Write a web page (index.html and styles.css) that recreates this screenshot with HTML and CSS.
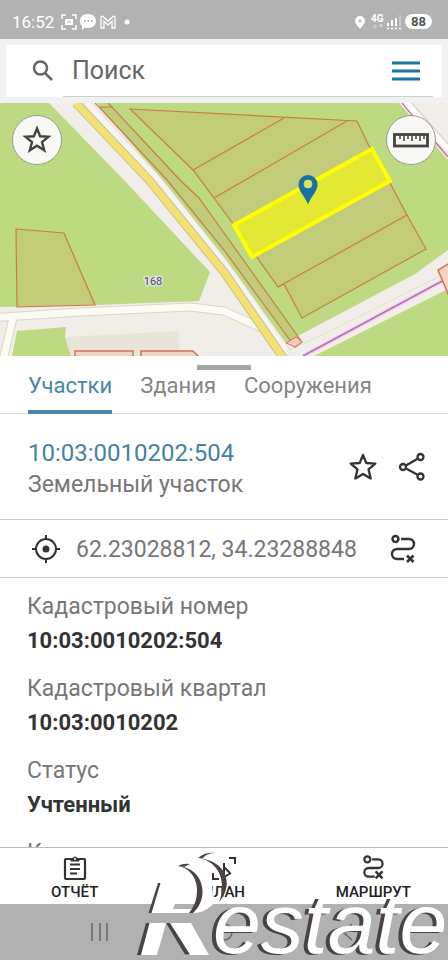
FILE: index.html
```html
<!DOCTYPE html>
<html lang="ru">
<head>
<meta charset="utf-8">
<meta name="viewport" content="width=device-width, initial-scale=1">
<title>Участки</title>
<link rel="stylesheet" href="styles.css">
</head>
<body>
<div class="app">
  <div class="status">
    <span class="clock">16:52</span>
    <svg class="status-left" width="76" height="18" viewBox="0 0 76 18" fill="none" stroke="#fff" stroke-width="1.5">
      <path d="M1 6V2h4M11 2h4v4M15 12v4h-4M5 16H1v-4"/><rect x="4" y="6" width="8" height="6" fill="#fff" stroke="none"/><path d="M6 10l2-2 2 2" stroke="#b2b2b2" stroke-width="1"/>
      <path d="M27 1c5 0 8 3 8 7s-3 7-8 7c-1 0-2 0-3-.5L21 17v-4c-1.500-1.200-2-3-2-5 0-4 3-7 8-7z" fill="#fff" stroke="none"/><path d="M23 8h1.500M26.500 8H28M30 8h1.500" stroke="#999"/>
      <path d="M40 15V4l1.500-1L47 8l5.500-5L54 4v11h-3V8l-4 4-4-4v7z" stroke-width="1.300"/>
      <circle cx="66" cy="9" r="2.500" fill="#fff" stroke="none"/>
    </svg>
    <svg class="status-right" width="46" height="16" viewBox="0 0 46 16">
      <path d="M5 2a5 5 0 0 1 5 5c0 3-3 5-5 8-2-3-5-5-5-8a5 5 0 0 1 5-5z" fill="#fff"/><circle cx="5" cy="7" r="1.500" fill="#b2b2b2"/>
      <text x="16" y="8" class="net">4G</text>
      <path d="M20 10v4M18 12l2 2 2-2M26 14v-4M24 12l2-2 2 2" stroke="#d8d8d8" fill="none"/>
      <path d="M33 12V9M37 12V6M41 12V4" stroke="#fff" stroke-width="2"/><path d="M45 12V1" stroke="#d0d0d0" stroke-width="1.500"/><path d="M32 14.500h14" stroke="#fff" stroke-width="1.500" stroke-dasharray="2 2"/>
    </svg>
    <span class="battery">88</span>
  </div>

  <header class="search">
    <div class="search-box">
      <svg width="24" height="24" viewBox="0 0 24 24" fill="none" stroke="#666" stroke-width="2.500"><circle cx="9.500" cy="9" r="6.500"/><path d="M14 14l7 7"/></svg>
      <div class="field">
        <input class="query" type="text" placeholder="Поиск" aria-label="Поиск">
        <button class="plain" aria-label="Меню"><svg width="28" height="20" viewBox="0 0 28 20"><path d="M0 2h28M0 10h28M0 18h28" stroke="#1c75a4" stroke-width="3"/></svg></button>
      </div>
    </div>
  </header>

  <section class="map">
    <svg class="map-art" viewBox="0 103 448 253" preserveAspectRatio="xMidYMid slice">
      <rect x="-400" y="103" width="1300" height="253" fill="#f1ede8"/>
      <g fill="#bdd981">
        <path d="M-400 103H49L122 178 210 272 199 301 95 305 0 307H-400z"/>
        <path d="M97 103H399L448 160V250L415 274 294 338 286 343 224 260 162 180z"/>
        <path d="M448 289V356H314z"/>
        <path d="M17 331L66 327 65 337 71 356H12z"/>
      </g>
      <path d="M66 337L179 331V356H71z" fill="#e9e4d8"/>
      <g fill="none" stroke-linejoin="round">
        <path d="M13 318L4 356M-10 318L80 312 190 307 224 311 262 328" stroke="#d9d6cc" stroke-width="9"/>
        <path d="M13 318L4 356M-10 318L80 312 190 307 224 311 262 328" stroke="#fbfbf2" stroke-width="7"/>
        <path d="M87 103L158 180 224 263 288 353" stroke="#e3dfd9" stroke-width="8"/>
        <path d="M87 103L158 180 224 263 288 353" stroke="#f6f4f1" stroke-width="6"/>
        <path d="M76 103L149 180 224 272 284 359" stroke="#c7bf9b" stroke-width="9"/>
        <path d="M76 103L149 180 224 272 284 359" stroke="#f5e072" stroke-width="7"/>
        <path d="M286 352L330 331 448 272" stroke="#d6e4cd"/>
        <path d="M303 356L448 278" stroke="#ead1e5" stroke-width="4"/>
        <path d="M303 356L448 278" stroke="#b968ba" stroke-width="1.500"/>
        <path d="M402 103L448 157" stroke="#cf7398" stroke-width="1.500"/>
        <path d="M406 103L448 149" stroke="#fff" stroke-width="5"/>
        <path d="M412 103L448 144" stroke="#e2bdca"/>
      </g>
      <g fill="#c2cb79" stroke="#c87d45" stroke-width="1.200">
        <path d="M95 103L99 107H112L180 180 199 198 224 233 302 342 295 347 224 250 167 180 99 107"/>
        <path d="M112 107L108 103" fill="none"/>
        <path d="M130 109L357 121 370 148 390 183 407 215 426 249 302 318 284 284 278 287 234 225 193 170z"/>
        <path d="M193 170L284 118M214 198L347 121M407 215L278 287" fill="none"/>
        <path d="M16 229L64 233 95 305 17 307z"/>
      </g>
      <path d="M286 343L296 337 302 342 295 347z" fill="#f3c8b5" stroke="#d77561"/>
      <path d="M75 360V351H133V360M141 360V351H193L202 360M450 263L438 270 449 296" fill="#efd4c5" stroke="#cf715c" stroke-width="1.500"/>
      <path d="M234 225L372 149 390 181 252 257z" fill="#e2e834" stroke="#ff0" stroke-width="4"/>
      <path d="M308 175a9.500 9.500 0 0 1 9.500 9.500c0 7-6 11-9.500 20-3.500-9-9.500-13-9.500-20a9.500 9.500 0 0 1 9.500-9.500z" fill="#1870a5"/>
      <circle cx="308" cy="184" r="4" fill="#e2e834" stroke="#b5d9b0"/>
      <text x="153" y="285" class="road-no">168</text>
    </svg>
    <div class="map-tools">
      <button class="round" aria-label="Избранное"><svg width="30" height="30" viewBox="0 0 30 30"><path d="M15 3.500l3.100 7.800 8.400.5-6.500 5.300 2.200 8.200-7.200-4.600-7.200 4.600L10 17.100l-6.500-5.300 8.400-.5z" fill="none" stroke="#444" stroke-width="2.400"/></svg></button>
      <button class="round" aria-label="Линейка"><svg width="36" height="16" viewBox="0 0 36 16" fill="none" stroke="#444"><rect x="1.500" y="2.500" width="33" height="11.500" stroke-width="2.800"/><path d="M7 3v4M11 3v6M15 3v4M19 3v6M23 3v4M27 3v6M31 3v4" stroke-width="1.500"/></svg></button>
    </div>
  </section>

  <main class="sheet">
    <div class="grip"></div>
    <nav class="tabs">
      <button class="tab tab-on">Участки</button>
      <button class="tab">Здания</button>
      <button class="tab">Сооружения</button>
    </nav>
    <section class="title-row">
      <div class="title-text">
        <h1>10:03:0010202:504</h1>
        <p>Земельный участок</p>
      </div>
      <button class="plain" aria-label="В избранное"><svg width="30" height="30" viewBox="0 0 30 30"><path d="M15 3l3.300 8 9 .6-6.800 5.700 2.200 9.200-7.700-4.500-7.700 4.500 2.200-9.200-6.800-5.700 9-.6z" fill="none" stroke="#333" stroke-width="2.300" stroke-linejoin="round"/></svg></button>
      <button class="plain" aria-label="Поделиться"><svg width="28" height="30" viewBox="0 0 28 30" fill="none" stroke="#333" stroke-width="2.300"><circle cx="5" cy="15" r="3"/><circle cx="22.500" cy="5" r="3"/><circle cx="22.500" cy="24.500" r="3"/><path d="M8 13.500l12-7M8 16.500l12 6.500"/></svg></button>
    </section>
    <section class="coords">
      <svg width="30" height="30" viewBox="0 0 30 30" fill="none" stroke="#333" stroke-width="2"><circle cx="15" cy="15" r="10"/><path d="M15 1v5M15 24v5M1 15h5M24 15h5"/><circle cx="15" cy="15" r="3.500" fill="#333" stroke="none"/></svg>
      <span class="coord-text">62.23028812, 34.23288848</span>
      <button class="plain" aria-label="Маршрут"><svg width="28" height="30" viewBox="0 0 28 30" fill="none" stroke="#333" stroke-width="2.400"><circle cx="7.500" cy="5" r="3"/><path d="M13 5h8a5 5 0 0 1 0 10H9a5 5 0 0 0 0 10h7"/><path d="M19 21.500l6.500 6.500M25.500 21.500L19 28" stroke-width="2.600"/></svg></button>
    </section>
    <dl class="facts">
      <dt>Кадастровый номер</dt><dd>10:03:0010202:504</dd>
      <dt>Кадастровый квартал</dt><dd>10:03:0010202</dd>
      <dt>Статус</dt><dd>Учтенный</dd>
      <dt>К</dt>
    </dl>
  </main>

  <footer class="bottom">
    <nav class="actions">
      <button class="action"><svg width="26" height="26" viewBox="0 0 26 26" fill="none" stroke="#333" stroke-width="2.200"><rect x="3" y="4" width="20" height="20" rx="1"/><path d="M8 9.500h10M8 14h10M8 18.500h7"/><path d="M9 4h2a2 2 0 0 1 4 0h2v2H9z" fill="#333" stroke-width="1"/><circle cx="13" cy="4" r="1" fill="#fff" stroke="none"/></svg>ОТЧЁТ</button>
      <button class="action"><svg width="26" height="26" viewBox="0 0 26 26" fill="none" stroke="#333" stroke-width="2"><path d="M18 3h6v6M2 18v6h6M13 8v14l7-4M13 12l6 6"/></svg>ПЛАН</button>
      <button class="action"><svg width="26" height="26" viewBox="0 0 28 30" fill="none" stroke="#333" stroke-width="2.600"><circle cx="7.500" cy="5" r="3.500"/><path d="M13 5h7a5 5 0 0 1 0 10H9a5 5 0 0 0 0 10h7"/><path d="M17 19l8 8M25 19l-8 8" stroke-width="2.800"/></svg>МАРШРУТ</button>
    </nav>
    <div class="system">
      <svg width="20" height="20" viewBox="0 0 20 20"><path d="M2 1v18M10 1v18M17 1v18" stroke="#666" stroke-width="1.500"/></svg>
      <svg width="20" height="20" viewBox="0 0 20 20"><circle cx="10" cy="10" r="8" fill="none" stroke="#666" stroke-width="1.500"/></svg>
      <svg width="20" height="20" viewBox="0 0 20 20"><path d="M14 2l-9 8 9 8" fill="none" stroke="#666" stroke-width="1.500"/></svg>
    </div>
    <div class="brand">
      <svg class="brand-mark" width="96" height="108" viewBox="134 852 96 108">
        <g fill="#fff">
          <path d="M160 883H180L178 866 198 858C208 862 213 880 213 904Q204 913 190 913H151z"/>
          <path d="M149 923H166L157 955H140z"/>
          <path d="M168 923H191L209 955H189z"/>
        </g>
        <path d="M173 909H197V904H175z" fill="#b1b1b1"/>
        <path d="M178 866C204 868 208 898 190 913Q204 914 213 904C213 880 208 862 198 858z" fill="#fff"/>
        <g fill="#4b4343">
          <path d="M158 883h2.500L151.500 913h-3z"/>
          <path d="M178 866C204 868 210 898 193 913H189C202 898 200 870 178 866z"/>
          <path d="M198 858C231 862 232 888 219 902 226 886 222 862 198 858z"/>
          <path d="M198 858q7-6 17-5-8 0-12 5zM178 866q5-3 12-2l-6 3z"/>
          <path d="M146 923h3.500L141 955h-4zM166 923h4L190 954.500h-5z"/>
        </g>
      </svg>
      <span class="brand-name">estate</span>
    </div>
  </footer>
</div>
</body>
</html>
```
FILE: styles.css
```css
* { box-sizing: border-box; }
body { margin: 0; font-family: Roboto, "Noto Sans", sans-serif; background: #fff; color: #333; }
button { font: inherit; color: inherit; background: none; border: 0; padding: 0; cursor: pointer; }
svg { display: block; flex: none; }
.app { display: flex; flex-direction: column; height: 100vh; overflow: hidden; }

.status { flex: none; display: flex; align-items: center; height: 39px; padding: 4px 16px 0 12px; background: #b2b2b2; color: #fff; }
.clock { font-size: 17px; }
.status-left { margin-left: 7px; }
.status-right { margin-left: auto; }
.net { font-size: 10px; font-weight: 700; fill: #fff; }
.battery { margin-left: 4px; padding: 0 6px; border-radius: 8px; background: #fff; color: #555; font-size: 13px; line-height: 15px; font-weight: 700; }

.search { flex: none; padding: 6px; background: #f1f1f1; }
.search-box { display: flex; align-items: center; gap: 8px; height: 52px; padding: 0 9px 0 25px; background: #fff; }
.field { flex: 1; display: flex; align-items: center; height: 52px; padding-right: 13px; border-bottom: 1px solid #ccd0d4; }
.query { flex: 1; min-width: 0; height: 50px; padding: 0 0 0 9px; border: 0; background: none; font: inherit; font-size: 25px; color: #666; outline: 0; }
.query::placeholder { color: #666; opacity: 1; }

.map { flex: none; position: relative; height: 253px; overflow: hidden; }
.map-art { width: 100%; height: 100%; }
.road-no { font-size: 11px; text-anchor: middle; fill: #4a4a78; stroke: #dce5d4; stroke-width: 3px; paint-order: stroke; }
.map-tools { position: absolute; top: 12px; left: 12px; right: 12px; display: flex; justify-content: space-between; }
.round { display: grid; place-items: center; width: 50px; height: 50px; border: 1px solid #9a9e94; border-radius: 50%; background: #f8f8f4; }

.sheet { position: relative; flex: 1; min-height: 0; overflow: hidden; }
.grip { position: absolute; top: 9px; left: 50%; width: 54px; height: 5px; margin-left: -27px; background: #a5a5a5; }
.tabs { display: flex; gap: 28px; height: 58px; padding: 0 28px; border-bottom: 1px solid #dcd8dc; }
.tab { height: 58px; padding-top: 5px; font-size: 22px; color: #858585; border-bottom: 4px solid transparent; }
.tab-on { color: #4787a8; border-color: #4787a8; }
.title-row { display: flex; align-items: center; gap: 20px; height: 106px; padding: 0 22px 0 28px; border-bottom: 1px solid #ccc; }
.title-text { flex: 1; padding-top: 4px; }
h1 { margin: 0; font-size: 24px; line-height: 32px; font-weight: 400; color: #4682a4; }
p { margin: 0; font-size: 23px; line-height: 32px; color: #777; }
.coords { display: flex; align-items: center; height: 58px; padding: 0 32px 0 31px; border-bottom: 1px solid #ccc; }
.coord-text { flex: 1; margin-left: 15px; padding-top: 2px; font-size: 23px; color: #777; }
.facts { margin: 0; padding: 12px 27px; font-size: 22px; line-height: 34px; }
dt { font-size: 23px; color: #777; }
dd { margin: 0 0 14px; font-weight: 700; color: #333; }

.bottom { flex: none; position: relative; overflow: hidden; }
.actions { display: grid; grid-template-columns: repeat(3, 1fr); height: 57px; border-top: 1px solid #bbb; background: #fff; }
.action { display: flex; flex-direction: column; align-items: center; padding-top: 7px; font-size: 15px; line-height: 22px; font-weight: 500; color: #222; }
.system { display: grid; grid-template-columns: repeat(3, 1fr); align-items: center; justify-items: center; height: 56px; padding: 0 38px; background: #b1b1b1; }
.brand { position: absolute; left: 134px; bottom: 0; display: flex; align-items: flex-end; }
.brand-name { height: 87px; margin-left: -17px; font-family: "Liberation Sans", sans-serif; font-size: 86px; line-height: 100px; font-style: italic; color: #fff; text-shadow: -4px 1px 0 #4b4343; }
```
